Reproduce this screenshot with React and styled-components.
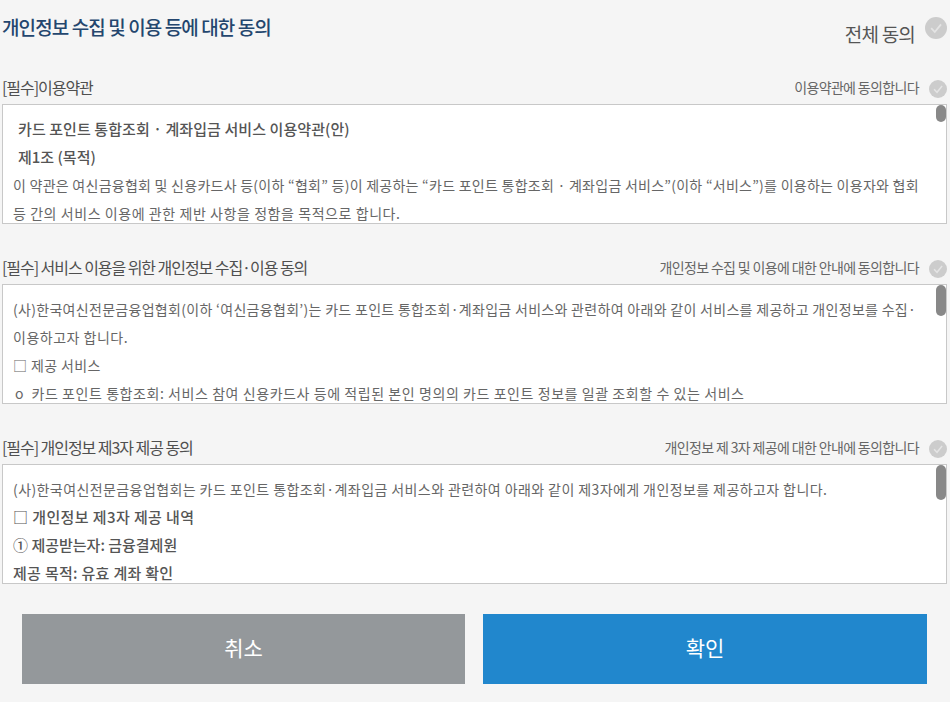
import React from "react";
import styled, { createGlobalStyle } from "styled-components";

const GlobalStyle = createGlobalStyle`
  html, body {
    margin: 0;
    padding: 0;
    background: #f5f5f5;
  }
  * {
    box-sizing: border-box;
  }
`;

const sections = [
  {
    label: "[필수]이용약관",
    agree: "이용약관에 동의합니다",
    thumb: 17,
    lines: [
      { text: "카드 포인트 통합조회 · 계좌입금 서비스 이용약관(안)", bold: true, indent: 5, track: 0.08 },
      { text: "제1조 (목적)", bold: true, indent: 5, track: 0 },
      { text: "이 약관은 여신금융협회 및 신용카드사 등(이하 “협회” 등)이 제공하는 “카드 포인트 통합조회 · 계좌입금 서비스”(이하 “서비스”)를 이용하는 이용자와 협회", track: 0.26 },
      { text: "등 간의 서비스 이용에 관한 제반 사항을 정함을 목적으로 합니다.", track: 0.57 },
    ],
  },
  {
    label: "[필수] 서비스 이용을 위한 개인정보 수집·이용 동의",
    agree: "개인정보 수집 및 이용에 대한 안내에 동의합니다",
    thumb: 31,
    lines: [
      { text: "(사)한국여신전문금융업협회(이하 ‘여신금융협회’)는 카드 포인트 통합조회·계좌입금 서비스와 관련하여 아래와 같이 서비스를 제공하고 개인정보를 수집·", track: 0.3 },
      { text: "이용하고자 합니다.", track: 0.5 },
      { text: "□ 제공 서비스", track: 0.4 },
      { text: "o\u00a0\u00a0카드 포인트 통합조회: 서비스 참여 신용카드사 등에 적립된 본인 명의의 카드 포인트 정보를 일괄 조회할 수 있는 서비스", indent: 2, track: 0.57 },
    ],
  },
  {
    label: "[필수] 개인정보 제3자 제공 동의",
    agree: "개인정보 제 3자 제공에 대한 안내에 동의합니다",
    thumb: 35,
    lines: [
      { text: "(사)한국여신전문금융업협회는 카드 포인트 통합조회·계좌입금 서비스와 관련하여 아래와 같이 제3자에게 개인정보를 제공하고자 합니다.", track: 0.41 },
      { text: "□ 개인정보 제3자 제공 내역", bold: true, track: 0.4 },
      { text: "① 제공받는자: 금융결제원", bold: true, track: 0 },
      { text: "제공 목적: 유효 계좌 확인", bold: true, track: 0.3 },
    ],
  },
];

const CheckIcon = ({ size }) => (
  <svg width={size} height={size} viewBox="0 0 22 22">
    <circle cx="11" cy="11" r="11" fill="#cccccc" />
    <path d="M6.2 11.2 L9.8 15 L16 7.4" fill="none" stroke="#e4e4e4" strokeWidth="1.8" />
  </svg>
);

const App = () => {
  return (
    <Page>
      <GlobalStyle />
      <TitleRow>
        <Title>개인정보 수집 및 이용 등에 대한 동의</Title>
        <AllAgree>
          <AllAgreeText>전체 동의</AllAgreeText>
          <CheckIcon size={22} />
        </AllAgree>
      </TitleRow>
      {sections.map((s, idx) => (
        <Section key={idx}>
          <SectionHead>
            <SectionLabel>{s.label}</SectionLabel>
            <Agree>
              <AgreeText>{s.agree}</AgreeText>
              <CheckIcon size={18} />
            </Agree>
          </SectionHead>
          <TermsBox>
            {s.lines.map((l, i) => (
              <Line key={i} $bold={l.bold} $indent={l.indent} $track={l.track}>
                {l.text}
              </Line>
            ))}
            <Thumb $height={s.thumb} />
          </TermsBox>
        </Section>
      ))}
      <Buttons>
        <Button $bg="#94989b">취소</Button>
        <Button $bg="#2187cd">확인</Button>
      </Buttons>
    </Page>
  );
};

const Page = styled.div`
  width: 950px;
  height: 702px;
  overflow: hidden;
  background: #f5f5f5;
  padding: 13px 3px 0 2px;
  font-family: "Noto Sans CJK KR", "Noto Sans", sans-serif;
`;

const TitleRow = styled.div`
  display: flex;
  justify-content: space-between;
  align-items: flex-start;
  height: 61px;
`;

const Title = styled.h1`
  margin: 0;
  font-size: 19px;
  line-height: 28px;
  font-weight: 500;
  letter-spacing: -0.9px;
  color: #24466e;
`;

const AllAgree = styled.div`
  display: flex;
  align-items: flex-start;
  gap: 10px;
  padding-top: 4px;
`;

const AllAgreeText = styled.span`
  font-size: 19px;
  line-height: 28px;
  margin-top: 3px;
  letter-spacing: -0.8px;
  color: #555555;
`;

const Section = styled.section`
  height: 180px;
`;

const SectionHead = styled.div`
  display: flex;
  justify-content: space-between;
  align-items: center;
  height: 30px;
`;

const SectionLabel = styled.h2`
  margin: -4px 0 0;
  font-size: 16px;
  line-height: 28px;
  font-weight: 400;
  letter-spacing: -1.05px;
  color: #4f4f4f;
`;

const Agree = styled.div`
  display: flex;
  align-items: center;
  gap: 10px;
`;

const AgreeText = styled.span`
  font-size: 14px;
  line-height: 20px;
  margin-top: -5px;
  letter-spacing: -0.65px;
  color: #666666;
`;

const TermsBox = styled.div`
  position: relative;
  height: 120px;
  overflow: hidden;
  padding: 10px 10px 0 10px;
  background: #ffffff;
  border: 1px solid #c8c8c8;
`;

const Line = styled.p`
  margin: 0 0 0 ${(props) => props.$indent || 0}px;
  font-size: ${(props) => (props.$bold ? 15 : 14)}px;
  line-height: 28px;
  font-weight: ${(props) => (props.$bold ? 500 : 400)};
  letter-spacing: ${(props) => props.$track}px;
  white-space: nowrap;
  color: ${(props) => (props.$bold ? "#555555" : "#666666")};
`;

const Thumb = styled.div`
  position: absolute;
  top: 0;
  right: 0;
  width: 10px;
  height: ${(props) => props.$height}px;
  border-radius: 5px;
  background: #888888;
`;

const Buttons = styled.div`
  display: grid;
  grid-template-columns: 443px 444px;
  gap: 18px;
  padding: 0 20px;
`;

const Button = styled.button`
  height: 70px;
  border: 0;
  padding: 0 0 4px;
  font-family: inherit;
  font-size: 21px;
  color: #ffffff;
  background: ${(props) => props.$bg};
`;

export default App;
